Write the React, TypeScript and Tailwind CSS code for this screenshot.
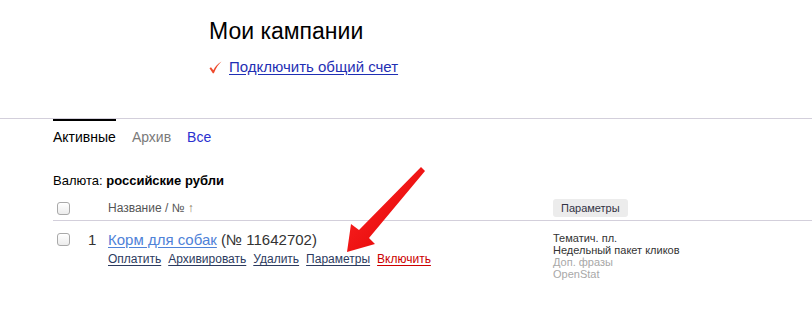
import React from "react";

function Checkbox() {
  return (
    <div className="w-[13px] h-[13px] rounded-[3px] border border-[#a9a9a9] bg-gradient-to-b from-white to-[#ececec] shadow-[inset_0_1px_0_#fff]" />
  );
}

export default function App() {
  return (
    <div className="relative w-[812px] h-[319px] overflow-hidden bg-white font-['Liberation_Sans',Arial,sans-serif] text-[#222]">
      <div className="pl-[209px] pt-[18px]">
        <h1 className="text-[23px] leading-[26px] text-black">Мои кампании</h1>
        <div className="mt-[14px] flex items-center gap-[7px]">
          <svg width="13" height="13" viewBox="0 0 13 13">
            <path d="M0.5 7.2 L2 6.2 L4.3 9.2 C6.3 5.6 8.8 2.6 12.5 0.5 C9.6 3.3 7 6.8 4.9 12.2 L3.8 12.2 Z" fill="#ee4a2c" />
          </svg>
          <a href="#" className="text-[15px] leading-[18px] text-[#1f2fb4] underline underline-offset-[2px]">
            Подключить общий счет
          </a>
        </div>
      </div>

      <div className="mt-[42px] border-t border-[#d3cfdb]">
        <div className="pl-[53px] flex gap-[16px] text-[14px] leading-[16px]">
          <div className="border-t-2 border-black pt-[8px] text-black">Активные</div>
          <div className="pt-[10px] text-[#7a7a7a]">Архив</div>
          <div className="pt-[10px] text-[#2a30d0]">Все</div>
        </div>
      </div>

      <div className="pl-[53px] mt-[28px] text-[13px] leading-[16px] text-black">
        Валюта: <b>российские рубли</b>
      </div>

      <div className="ml-[53px] mt-[10px] flex items-center border-b border-[#d3cfdb] pb-[3px]">
        <div className="w-[55px] pl-[4px]">
          <Checkbox />
        </div>
        <div className="w-[445px] text-[12px] leading-[16px] text-[#555]">
          Название / № <span className="text-[#8a7a5a]">↑</span>
        </div>
        <div className="rounded-[3px] bg-[#ececec] px-[8px] py-[2px] text-[11px] leading-[14px] text-[#334]">
          Параметры
        </div>
      </div>

      <div className="ml-[53px] mt-[10px] flex items-start">
        <div className="w-[35px] pl-[4px] pt-[2px]">
          <Checkbox />
        </div>
        <div className="w-[20px] text-[15px] leading-[18px] text-[#333]">1</div>
        <div className="w-[445px]">
          <div className="text-[15px] leading-[18px] text-[#333]">
            <a href="#" className="text-[#4f82d8] underline underline-offset-[2px]">Корм для собак</a> (№ 11642702)
          </div>
          <div className="mt-[3px] flex gap-[7px] text-[12px] leading-[15px]">
            <a href="#" className="text-[#2c3a5e] underline underline-offset-[2px]">Оплатить</a>
            <a href="#" className="text-[#2c3a5e] underline underline-offset-[2px]">Архивировать</a>
            <a href="#" className="text-[#2c3a5e] underline underline-offset-[2px]">Удалить</a>
            <a href="#" className="text-[#2c3a5e] underline underline-offset-[2px]">Параметры</a>
            <a href="#" className="text-[#cc0000] underline underline-offset-[2px]">Включить</a>
          </div>
        </div>
        <div className="pt-[1px] text-[11px] leading-[12px]">
          <div className="text-[#333]">Тематич. пл.</div>
          <div className="text-[#333]">Недельный пакет кликов</div>
          <div className="text-[#a8a8a8]">Доп. фразы</div>
          <div className="text-[#a8a8a8]">OpenStat</div>
        </div>
      </div>

      <svg className="absolute left-0 top-0 pointer-events-none" width="812" height="319" viewBox="0 0 812 319">
        <defs>
          <linearGradient id="ar" x1="0" y1="0" x2="1" y2="1">
            <stop offset="0" stopColor="#ff2a2a" />
            <stop offset="1" stopColor="#e00000" />
          </linearGradient>
        </defs>
        <polygon
          points="421,167 425,171 369,238 375,244 347,252 351,224 359,230"
          fill="url(#ar)"
        />
      </svg>
    </div>
  );
}
